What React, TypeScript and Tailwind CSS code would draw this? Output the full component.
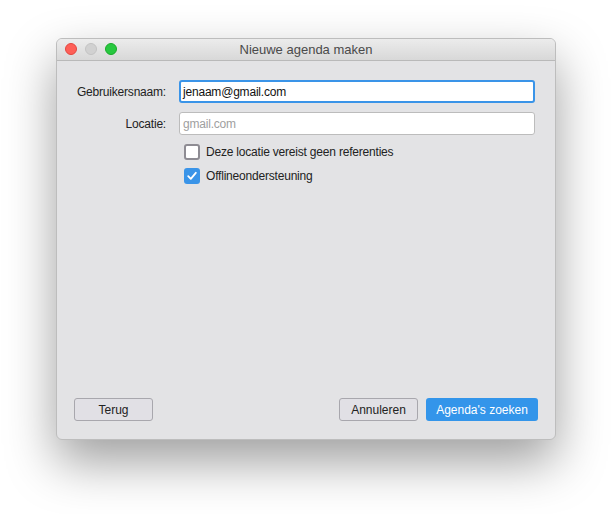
export default function App() {
  return (
    <div className="w-[612px] h-[514px] bg-white pt-[38px] pl-[56px]" style={{ fontFamily: '"Liberation Sans", Arial, sans-serif' }}>
      <div className="w-[500px] h-[402px] rounded-[6px] bg-[#e3e3e5] border border-[#bdbdbd] shadow-[0_22px_50px_rgba(0,0,0,0.38)] flex flex-col overflow-hidden">
        <div className="relative h-[22px] shrink-0 bg-gradient-to-b from-[#ececec] to-[#d8d8d8] border-b border-[#b9b9b9] flex items-center justify-center">
          <div className="absolute left-[8px] top-[4px] flex gap-[8px]">
            <span className="w-[12px] h-[12px] rounded-full bg-[#fe5f57] border border-[#e2463f]" />
            <span className="w-[12px] h-[12px] rounded-full bg-[#d1d1d1] border border-[#c3c3c3]" />
            <span className="w-[12px] h-[12px] rounded-full bg-[#28c840] border border-[#1aab29]" />
          </div>
          <span className="text-[13px] text-[#4a4a4a]">Nieuwe agenda maken</span>
        </div>
        <div className="flex-1 flex flex-col px-[17px] pt-[19px] pb-[18px]">
          <div className="flex items-center">
            <span className="w-[92px] text-right text-[12px] tracking-[-0.2px] text-[#222]">Gebruikersnaam:</span>
            <div className="ml-[13px] w-[356px] h-[23px] bg-white border-[2px] border-[#3a94e8] rounded-[3px] flex items-center px-[2px] text-[12px] tracking-[-0.2px] text-[#111]">jenaam@gmail.com</div>
          </div>
          <div className="flex items-center mt-[9px]">
            <span className="w-[92px] text-right text-[12px] tracking-[-0.2px] text-[#222]">Locatie:</span>
            <div className="ml-[13px] w-[356px] h-[23px] bg-white border border-[#bcbcbc] rounded-[3px] flex items-center px-[3px] text-[12px] tracking-[-0.2px] text-[#a0a0a0]">gmail.com</div>
          </div>
          <div className="flex items-center h-[16px] mt-[9px] ml-[110px]">
            <span className="w-[16px] h-[16px] rounded-[3px] bg-white border-[2px] border-[#8e8c93]" />
            <span className="ml-[6px] text-[12px] leading-4 tracking-[-0.2px] text-[#222]">Deze locatie vereist geen referenties</span>
          </div>
          <div className="flex items-center h-[16px] mt-[8px] ml-[110px]">
            <span className="w-[16px] h-[16px] rounded-[3px] bg-[#3a94e8] flex items-center justify-center">
              <svg width="12" height="12" viewBox="0 0 12 12">
                <path d="M2.2 6.2 L4.8 8.8 L9.8 2.8" fill="none" stroke="white" strokeWidth="1.8" strokeLinecap="round" strokeLinejoin="round" />
              </svg>
            </span>
            <span className="ml-[6px] text-[12px] leading-4 tracking-[-0.2px] text-[#222]">Offlineondersteuning</span>
          </div>
          <div className="mt-auto flex items-center">
            <button className="w-[79px] h-[23px] bg-[#e1e0e5] border border-[#a8a7ad] rounded-[3px] text-[12px] text-[#222]">Terug</button>
            <button className="ml-auto w-[79px] h-[23px] bg-[#e1e0e5] border border-[#a8a7ad] rounded-[3px] text-[12px] text-[#222]">Annuleren</button>
            <button className="ml-[8px] w-[112px] h-[23px] bg-[#3395ea] rounded-[3px] text-[12px] text-white">Agenda's zoeken</button>
          </div>
        </div>
      </div>
    </div>
  );
}
